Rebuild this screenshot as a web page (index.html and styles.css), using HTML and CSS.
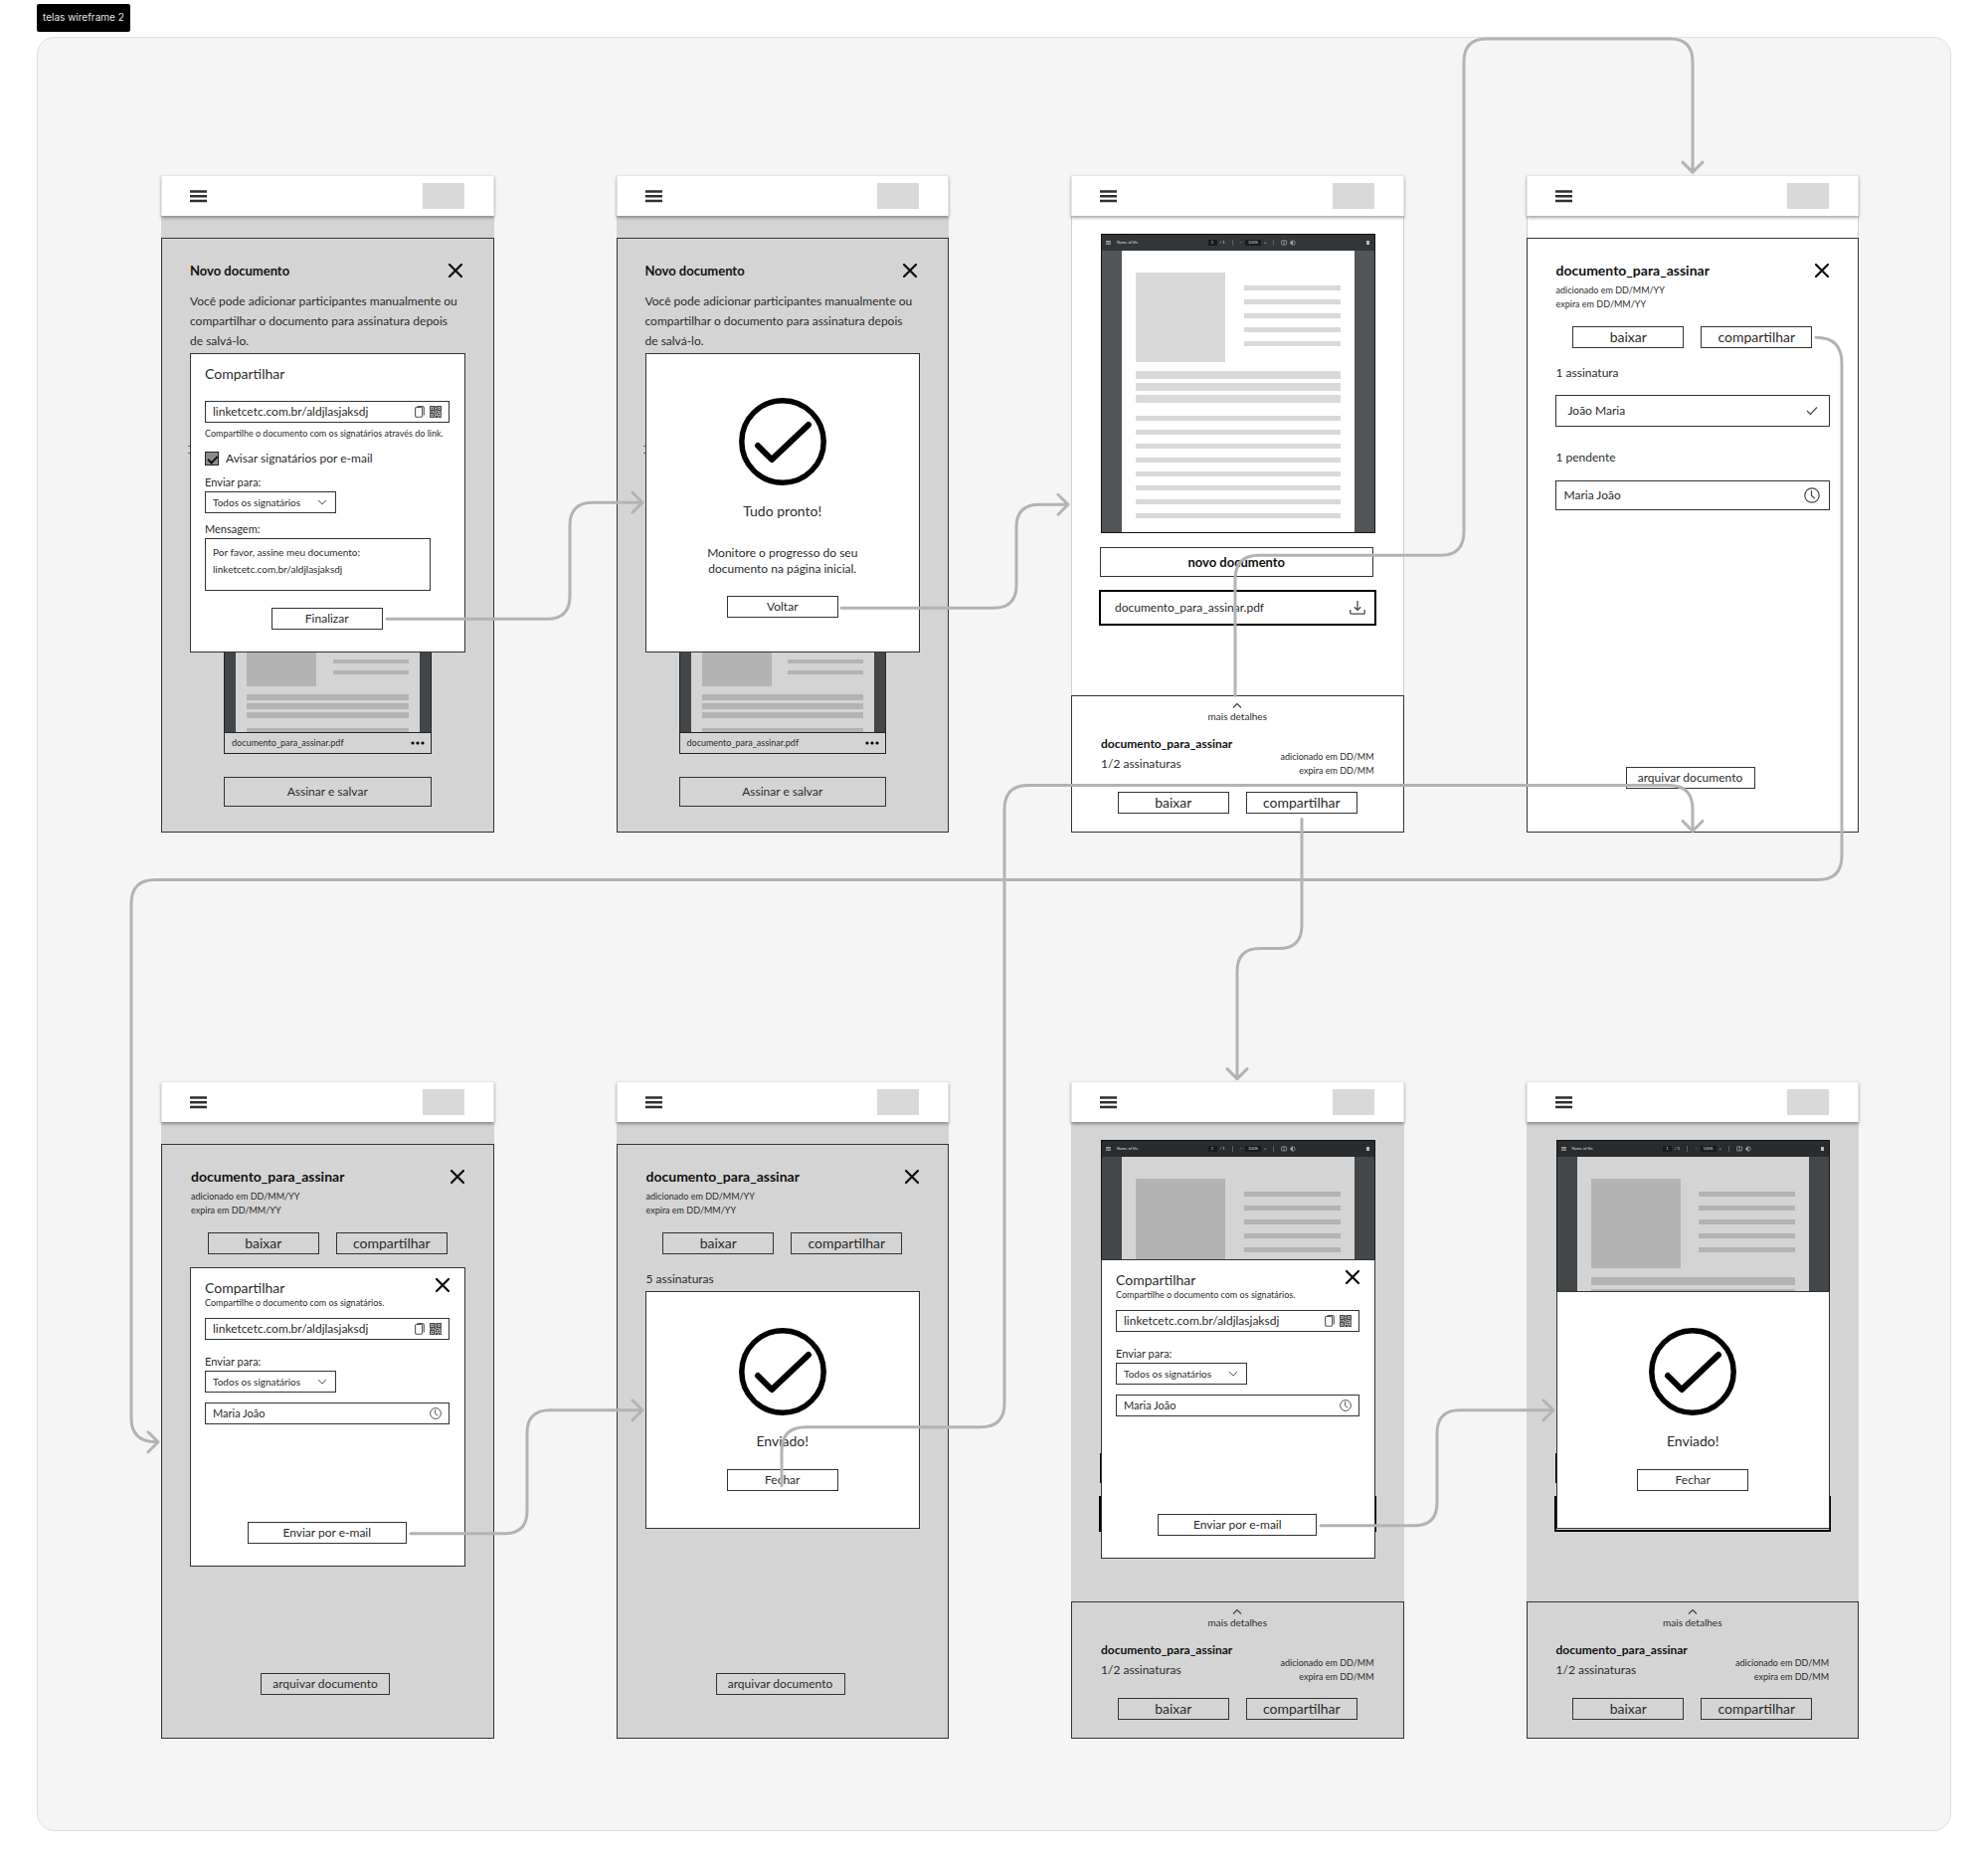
FILE: index.html
```html
<!DOCTYPE html>
<html lang="pt-BR">
<head>
<meta charset="utf-8">
<meta name="viewport" content="width=device-width, initial-scale=1">
<title>telas wireframe 2</title>
<link rel="stylesheet" href="styles.css">
</head>
<body>
<svg class="symbols" aria-hidden="true">
  <symbol id="i-menu" viewBox="0 0 17 13"><path d="M0 1.500h17M0 6.200h17M0 11h17" fill="none" stroke="#2f2f32" stroke-width="2.400"/></symbol>
  <symbol id="i-close" viewBox="0 0 14 14"><path d="M1 1l12 12M13 1L1 13" fill="none" stroke="#111" stroke-width="2.300" stroke-linecap="round"/></symbol>
  <symbol id="i-copy" viewBox="0 0 10 12"><path d="M2.500 .6h5.300a1.500 1.500 0 0 1 1.500 1.500v7.500" fill="none" stroke="#555" stroke-width="1.100"/><rect x=".6" y="1.500" width="7" height="9.800" rx="1.200" fill="none" stroke="#555" stroke-width="1.100"/></symbol>
  <symbol id="i-qr" viewBox="0 0 12 12"><path d="M0 0h12v12H0z" fill="#aaa"/><path d="M.5.5h4v4h-4zM7.500.5h4v4h-4zM.5 7.500h4v4h-4z" fill="none" stroke="#444"/><path d="M2 2h1v1H2zM9 2h1v1H9zM2 9h1v1H2zM5.500 0h1v2h-1zM5.500 3h1v3h-1zM0 5.500h3v1H0zM4 5.500h1.500v1H4zM7 6h2v1H7zM10 5.500h2v1h-2zM6 7h1v2H6zM8 8h2v1H8zM11 7.500h1v2h-1zM6 10h2v2H6zM9 10h1v2H9zM10.500 10.500h1.500v1.500h-1.500z" fill="#444"/></symbol>
  <symbol id="i-down" viewBox="0 0 10 6"><path d="M1 1l4 4 4-4" fill="none" stroke="#555"/></symbol>
  <symbol id="i-up" viewBox="0 0 10 5"><path d="M1 4.500l4-4 4 4" fill="none" stroke="#444" stroke-width="1.200"/></symbol>
  <symbol id="i-tick" viewBox="0 0 12 10"><path d="M1 5l3.500 3.500L11 1.500" fill="none" stroke="#444" stroke-width="1.200"/></symbol>
  <symbol id="i-clock" viewBox="0 0 16 16"><circle cx="8" cy="8" r="7.200" fill="none" stroke="#444" stroke-width="1.200"/><path d="M7.500 3v5.500l3.500 2.500" fill="none" stroke="#444" stroke-width="1.200"/></symbol>
  <symbol id="i-save" viewBox="0 0 16 14"><path d="M8 0v9M4.800 6.200L8 9.400l3.200-3.200M.8 9v3.200a1 1 0 0 0 1 1h12.400a1 1 0 0 0 1-1V9" fill="none" stroke="#444" stroke-width="1.300"/></symbol>
  <symbol id="i-dots" viewBox="0 0 14 4"><circle cx="2" cy="2" r="1.600"/><circle cx="7" cy="2" r="1.600"/><circle cx="12" cy="2" r="1.600"/></symbol>
  <symbol id="i-done" viewBox="0 0 88 88"><circle cx="44" cy="44" r="41.200" fill="none" stroke="#000" stroke-width="5.500"/><path d="M19 48l14 14 37-35" fill="none" stroke="#000" stroke-width="6" stroke-linecap="round" stroke-linejoin="round"/></symbol>
  <symbol id="i-tools" viewBox="0 0 15 6"><rect x=".4" y=".8" width="5.200" height="4.200" rx=".5" fill="none" stroke="#aaa" stroke-width=".7"/><path d="M3 1v4" stroke="#aaa" stroke-width=".7"/><circle cx="12" cy="3" r="2.200" fill="none" stroke="#aaa" stroke-width=".7"/><path d="M9 3l3-2v4z" fill="#aaa"/></symbol>
</svg>

<h1 class="tag">telas wireframe 2</h1>

<main class="board">

  <section class="screen dim">
    <header class="bar"><button class="icon" aria-label="Menu"><svg class="menu"><use href="#i-menu"/></svg></button><span class="logo"></span></header>
    <div class="panel">
      <div class="title-row inset"><h2 class="title">Novo documento</h2><button class="icon" aria-label="Fechar"><svg class="close"><use href="#i-close"/></svg></button></div>
      <p class="intro">Você pode adicionar participantes manualmente ou compartilhar o documento para assinatura depois de salvá-lo.</p>
      <form class="modal share peek">
        <h3 class="modal-title">Compartilhar</h3>
        <div class="link-box first"><input type="text" readonly aria-label="Link" value="linketcetc.com.br/aldjlasjaksdj"><svg class="copy"><use href="#i-copy"/></svg><svg class="qr"><use href="#i-qr"/></svg></div>
        <p class="help">Compartilhe o documento com os signatários através do link.</p>
        <label class="check"><input type="checkbox" checked>Avisar signatários por e-mail</label>
        <label class="label" for="to1">Enviar para:</label>
        <span class="select"><select id="to1"><option>Todos os signatários</option></select><svg class="down"><use href="#i-down"/></svg></span>
        <label class="label message-label" for="msg">Mensagem:</label>
        <textarea id="msg" class="message">Por favor, assine meu documento:
linketcetc.com.br/aldjlasjaksdj</textarea>
        <button type="button" class="btn finish">Finalizar</button>
      </form>
      <div class="mini">
        <div class="mini-page">
          <div class="mini-top"><i class="mini-pic"></i><div class="mini-lines"><i></i><i></i></div></div>
          <div class="mini-bars"><i></i><i></i><i></i></div>
          <i class="mini-last"></i>
        </div>
      </div>
      <div class="mini-file"><span>documento_para_assinar.pdf</span><svg class="dots"><use href="#i-dots"/></svg></div>
      <button class="btn sign">Assinar e salvar</button>
    </div>
  </section>

  <section class="screen dim">
    <header class="bar"><button class="icon" aria-label="Menu"><svg class="menu"><use href="#i-menu"/></svg></button><span class="logo"></span></header>
    <div class="panel">
      <div class="title-row inset"><h2 class="title">Novo documento</h2><button class="icon" aria-label="Fechar"><svg class="close"><use href="#i-close"/></svg></button></div>
      <p class="intro">Você pode adicionar participantes manualmente ou compartilhar o documento para assinatura depois de salvá-lo.</p>
      <div class="modal ready peek">
        <svg class="done"><use href="#i-done"/></svg>
        <h3 class="modal-title">Tudo pronto!</h3>
        <p class="note">Monitore o progresso do seu documento na página inicial.</p>
        <button class="btn">Voltar</button>
      </div>
      <div class="mini">
        <div class="mini-page">
          <div class="mini-top"><i class="mini-pic"></i><div class="mini-lines"><i></i><i></i></div></div>
          <div class="mini-bars"><i></i><i></i><i></i></div>
          <i class="mini-last"></i>
        </div>
      </div>
      <div class="mini-file"><span>documento_para_assinar.pdf</span><svg class="dots"><use href="#i-dots"/></svg></div>
      <button class="btn sign">Assinar e salvar</button>
    </div>
  </section>

  <section class="screen">
    <header class="bar"><button class="icon" aria-label="Menu"><svg class="menu"><use href="#i-menu"/></svg></button><span class="logo"></span></header>
    <div class="home">
      <div class="viewer">
        <div class="tools"><svg class="tiny-menu"><use href="#i-menu"/></svg><span>Name of file</span><div class="tools-mid"><b>1</b><span>/ 1</span><em></em><span>−</span><b class="zoom">100%</b><span>+</span><em></em><svg class="tool-icons"><use href="#i-tools"/></svg></div><i></i></div>
        <div class="page">
          <div class="page-top"><i class="pic"></i><div class="lines"><i></i><i></i><i></i><i></i><i></i></div></div>
          <div class="bars"><i></i><i></i><i></i></div>
          <div class="lines"><i></i><i></i><i></i><i></i><i></i><i></i><i></i><i></i></div>
        </div>
      </div>
      <button class="btn new">novo documento</button>
      <div class="file"><span>documento_para_assinar.pdf</span><svg class="save"><use href="#i-save"/></svg></div>
    </div>
    <footer class="sheet">
      <button class="more"><svg class="up"><use href="#i-up"/></svg>mais detalhes</button>
      <div class="summary"><div><h2 class="doc">documento_para_assinar</h2><p class="count">1/2 assinaturas</p></div><p class="dates">adicionado em DD/MM<br>expira em DD/MM</p></div>
      <div class="actions"><button class="btn big">baixar</button><button class="btn big">compartilhar</button></div>
    </footer>
  </section>

  <section class="screen">
    <header class="bar"><button class="icon" aria-label="Menu"><svg class="menu"><use href="#i-menu"/></svg></button><span class="logo"></span></header>
    <div class="panel">
      <div class="title-row"><h2 class="title large">documento_para_assinar</h2><button class="icon" aria-label="Fechar"><svg class="close"><use href="#i-close"/></svg></button></div>
      <p class="meta">adicionado em DD/MM/YY<br>expira em DD/MM/YY</p>
      <div class="actions"><button class="btn big">baixar</button><button class="btn big">compartilhar</button></div>
      <h3 class="group">1 assinatura</h3>
      <div class="person signed"><span>João Maria</span><svg class="tick"><use href="#i-tick"/></svg></div>
      <h3 class="group next">1 pendente</h3>
      <div class="person"><span>Maria João</span><svg class="clock"><use href="#i-clock"/></svg></div>
      <button class="btn archive">arquivar documento</button>
    </div>
  </section>

  <section class="screen dim">
    <header class="bar"><button class="icon" aria-label="Menu"><svg class="menu"><use href="#i-menu"/></svg></button><span class="logo"></span></header>
    <div class="panel">
      <div class="title-row"><h2 class="title large">documento_para_assinar</h2><button class="icon" aria-label="Fechar"><svg class="close"><use href="#i-close"/></svg></button></div>
      <p class="meta">adicionado em DD/MM/YY<br>expira em DD/MM/YY</p>
      <div class="actions"><button class="btn big">baixar</button><button class="btn big">compartilhar</button></div>
      <form class="modal share below">
        <div class="modal-head"><h3 class="modal-title">Compartilhar</h3><button type="button" class="icon" aria-label="Fechar"><svg class="close"><use href="#i-close"/></svg></button></div>
        <p class="help tight">Compartilhe o documento com os signatários.</p>
        <div class="link-box"><input type="text" readonly aria-label="Link" value="linketcetc.com.br/aldjlasjaksdj"><svg class="copy"><use href="#i-copy"/></svg><svg class="qr"><use href="#i-qr"/></svg></div>
        <label class="label spaced" for="to2">Enviar para:</label>
        <span class="select"><select id="to2"><option>Todos os signatários</option></select><svg class="down"><use href="#i-down"/></svg></span>
        <div class="recipient"><span>Maria João</span><svg class="clock-small"><use href="#i-clock"/></svg></div>
        <button type="button" class="btn send">Enviar por e-mail</button>
      </form>
      <button class="btn archive">arquivar documento</button>
    </div>
  </section>

  <section class="screen dim">
    <header class="bar"><button class="icon" aria-label="Menu"><svg class="menu"><use href="#i-menu"/></svg></button><span class="logo"></span></header>
    <div class="panel">
      <div class="title-row"><h2 class="title large">documento_para_assinar</h2><button class="icon" aria-label="Fechar"><svg class="close"><use href="#i-close"/></svg></button></div>
      <p class="meta">adicionado em DD/MM/YY<br>expira em DD/MM/YY</p>
      <div class="actions"><button class="btn big">baixar</button><button class="btn big">compartilhar</button></div>
      <h3 class="group">5 assinaturas</h3>
      <div class="modal sent">
        <svg class="done"><use href="#i-done"/></svg>
        <h3 class="modal-title">Enviado!</h3>
        <button class="btn">Fechar</button>
      </div>
      <button class="btn archive">arquivar documento</button>
    </div>
  </section>

  <section class="screen dim">
    <header class="bar"><button class="icon" aria-label="Menu"><svg class="menu"><use href="#i-menu"/></svg></button><span class="logo"></span></header>
    <div class="home">
      <div class="viewer">
        <div class="tools"><svg class="tiny-menu"><use href="#i-menu"/></svg><span>Name of file</span><div class="tools-mid"><b>1</b><span>/ 1</span><em></em><span>−</span><b class="zoom">100%</b><span>+</span><em></em><svg class="tool-icons"><use href="#i-tools"/></svg></div><i></i></div>
        <div class="page">
          <div class="page-top"><i class="pic"></i><div class="lines"><i></i><i></i><i></i><i></i><i></i></div></div>
        </div>
      </div>
      <div class="new-edge"></div>
      <div class="file"></div>
      <form class="modal share over">
        <div class="modal-head"><h3 class="modal-title">Compartilhar</h3><button type="button" class="icon" aria-label="Fechar"><svg class="close"><use href="#i-close"/></svg></button></div>
        <p class="help tight">Compartilhe o documento com os signatários.</p>
        <div class="link-box"><input type="text" readonly aria-label="Link" value="linketcetc.com.br/aldjlasjaksdj"><svg class="copy"><use href="#i-copy"/></svg><svg class="qr"><use href="#i-qr"/></svg></div>
        <label class="label spaced" for="to3">Enviar para:</label>
        <span class="select"><select id="to3"><option>Todos os signatários</option></select><svg class="down"><use href="#i-down"/></svg></span>
        <div class="recipient"><span>Maria João</span><svg class="clock-small"><use href="#i-clock"/></svg></div>
        <button type="button" class="btn send">Enviar por e-mail</button>
      </form>
    </div>
    <footer class="sheet">
      <button class="more"><svg class="up"><use href="#i-up"/></svg>mais detalhes</button>
      <div class="summary"><div><h2 class="doc">documento_para_assinar</h2><p class="count">1/2 assinaturas</p></div><p class="dates">adicionado em DD/MM<br>expira em DD/MM</p></div>
      <div class="actions"><button class="btn big">baixar</button><button class="btn big">compartilhar</button></div>
    </footer>
  </section>

  <section class="screen dim">
    <header class="bar"><button class="icon" aria-label="Menu"><svg class="menu"><use href="#i-menu"/></svg></button><span class="logo"></span></header>
    <div class="home">
      <div class="viewer">
        <div class="tools"><svg class="tiny-menu"><use href="#i-menu"/></svg><span>Name of file</span><div class="tools-mid"><b>1</b><span>/ 1</span><em></em><span>−</span><b class="zoom">100%</b><span>+</span><em></em><svg class="tool-icons"><use href="#i-tools"/></svg></div><i></i></div>
        <div class="page">
          <div class="page-top"><i class="pic"></i><div class="lines"><i></i><i></i><i></i><i></i><i></i></div></div>
          <div class="bars"><i></i><i></i></div>
        </div>
      </div>
      <div class="new-edge"></div>
      <div class="file"></div>
      <div class="modal sent over low">
        <svg class="done"><use href="#i-done"/></svg>
        <h3 class="modal-title">Enviado!</h3>
        <button class="btn">Fechar</button>
      </div>
    </div>
    <footer class="sheet">
      <button class="more"><svg class="up"><use href="#i-up"/></svg>mais detalhes</button>
      <div class="summary"><div><h2 class="doc">documento_para_assinar</h2><p class="count">1/2 assinaturas</p></div><p class="dates">adicionado em DD/MM<br>expira em DD/MM</p></div>
      <div class="actions"><button class="btn big">baixar</button><button class="btn big">compartilhar</button></div>
    </footer>
  </section>

  <svg class="flows" viewBox="37 37 1925 1803" preserveAspectRatio="none" aria-hidden="true">
    <path d="M389 622H550Q573 622 573 599V528Q573 505 596 505H645M636 495l10 10-10 10"/>
    <path d="M846 611H999Q1022 611 1022 588V530Q1022 507 1045 507H1073M1064 497l10 10-10 10"/>
    <path d="M1242 699V582Q1242 558 1266 558H1449Q1472 558 1472 534V62Q1472 39 1495 39H1679Q1702 39 1702 62V172M1692 163l10 10 10-10"/>
    <path d="M1826 339Q1852 339 1852 365V860Q1852 884 1828 884H156Q132 884 132 908V1425Q132 1449 158 1449M149 1439l10 10-10 10"/>
    <path d="M1309 823V930Q1309 953 1286 953H1267Q1244 953 1244 976V1083M1234 1074l10 10 10-10"/>
    <path d="M413 1541H507Q530 1541 530 1518V1440Q530 1417 553 1417H645M636 1407l10 10-10 10"/>
    <path d="M786 1493V1458Q786 1434 810 1434H986Q1010 1434 1010 1410V813Q1010 789 1034 789H1678Q1702 789 1702 813V834M1692 825l10 10 10-10"/>
    <path d="M1328 1533H1422Q1445 1533 1445 1510V1440Q1445 1417 1468 1417H1561M1552 1407l10 10-10 10"/>
  </svg>
</main>
</body>
</html>
```
FILE: styles.css
```css
* { box-sizing: border-box; }
body { margin: 0; padding: 4px 37px 38px; background: #fff; font: 12px/20px Lato, sans-serif; color: #2b2b2b; }
h1, h2, h3, p { margin: 0; font-size: inherit; font-weight: 400; }
button, input, select, textarea { margin: 0; padding: 0; font: inherit; color: inherit; border-radius: 0; }
svg { display: block; flex: none; }
.symbols { position: absolute; width: 0; height: 0; }

.tag { width: max-content; height: 28px; padding: 0 6px; border-radius: 2px; background: #000; color: #e6e6e6; font: 10px/26px Inter, sans-serif; }

/* board and screens */
.board { position: relative; display: grid; grid-template-columns: repeat(4, 1fr); gap: 250px 123px; margin-top: 5px; padding: 138px 92px 92px 124px; border: 1px solid #e0e0e0; border-radius: 18px; background: #f5f5f5; }
.flows { position: absolute; inset: -1px; width: calc(100% + 2px); height: calc(100% + 2px); overflow: visible; fill: none; stroke: #b3b3b3; stroke-width: 3; stroke-linecap: round; stroke-linejoin: round; pointer-events: none; }
.screen { --paper: #fff; --shape: #d9d9d9; --side: #525659; --tools: #323639; display: flex; flex-direction: column; background: var(--paper); box-shadow: inset 0 0 0 1px #d0d0d0; }
.screen.dim { --paper: #d4d4d4; --shape: #b3b3b3; --side: #434749; --tools: #282c2f; box-shadow: none; }
.bar { display: flex; align-items: center; justify-content: space-between; height: 41px; padding: 0 29px 0 28px; border: 1px solid #e6e6e6; border-bottom: 0; background: #fff; box-shadow: 0 2px 3px rgba(0, 0, 0, .35); }
.logo { width: 42px; height: 26px; background: #d9d9d9; }
.icon { display: block; border: 0; background: none; }
.menu { width: 17px; height: 13px; }
.close { width: 14px; height: 14px; }

/* buttons */
.btn { display: block; width: 112px; height: 22px; border: 1px solid #333; background: none; line-height: 20px; text-align: center; }
.btn.big { font-size: 14px; }
.actions { display: flex; justify-content: center; gap: 17px; }

/* full panel */
.panel { display: flex; flex: 1; flex-direction: column; margin-top: 22px; padding: 22px 28px 25px; border: 1px solid #333; }
.title-row { display: flex; align-items: center; justify-content: space-between; padding: 0 1px; }
.title-row.inset { padding: 0 3px 0 0; }
.title { color: #111; font-size: 13px; font-weight: 700; }
.title.large { font-size: 14px; }
.intro { margin-top: 11px; padding-right: 4px; }
.meta { margin: 3px 0 15px; padding-left: 1px; font-size: 9px; line-height: 14px; }
.group { margin-top: 15px; padding-left: 1px; }
.group.next { margin-top: 21px; }
.person { display: flex; align-items: center; justify-content: space-between; height: 30px; margin-top: 13px; padding: 0 9px 0 8px; border: 1px solid #333; }
.person.signed { height: 32px; margin-top: 12px; padding: 0 11px 0 12px; }
.tick { width: 12px; height: 10px; }
.clock { width: 16px; height: 16px; }
.archive { width: 130px; margin: auto auto 18px 71px; }

/* dialogs */
.modal { position: relative; border: 1px solid #333; background: #fff; }
.modal-title { font-size: 14px; }
.share { padding: 10px 15px 22px 14px; }
.share.below { margin-top: 13px; }
.peek { margin-top: 2px; }
.peek::before { content: ""; position: absolute; left: -3px; top: 92px; width: 2px; height: 6px; border: 1px solid #666; border-width: 1px 0; }
.modal-head { display: flex; justify-content: space-between; align-items: flex-start; height: 20px; }
.link-box { display: flex; align-items: center; height: 22px; margin-top: 10px; padding: 0 7px; border: 1px solid #333; }
.link-box.first { margin-top: 17px; }
.link-box input { flex: 1; min-width: 0; border: 0; outline: 0; background: none; line-height: 18px; }
.copy { width: 10px; height: 12px; margin-right: 5px; }
.qr { width: 12px; height: 12px; }
.help { margin-top: 4px; font-size: 9px; line-height: 14px; white-space: nowrap; }
.help.tight { margin-top: 0; line-height: 10px; }
.check { display: flex; align-items: center; height: 14px; margin-top: 11px; gap: 7px; }
.check input { position: relative; width: 14px; height: 14px; appearance: none; border: 1px solid #222; background: #8c8c8c; }
.check input:checked::after { content: ""; position: absolute; left: 4px; top: 1px; width: 4px; height: 8px; border: solid #111; border-width: 0 2px 2px 0; transform: rotate(45deg); }
.label { display: block; margin-top: 10px; font-size: 11px; line-height: 14px; }
.label.spaced { margin-top: 15px; }
.message-label { margin-top: 9px; }
.select { position: relative; display: block; width: 132px; height: 22px; margin-top: 2px; }
.select select { width: 100%; height: 100%; padding: 0 7px; appearance: none; border: 1px solid #333; background: none; font-size: 10px; }
.down { position: absolute; right: 9px; top: 8px; width: 10px; height: 6px; }
.message { display: block; width: 227px; height: 53px; margin-top: 2px; padding: 5px 7px; border: 1px solid #333; background: none; resize: none; overflow: hidden; font-size: 10px; line-height: 17px; }
.finish { margin: 17px auto 0; }
.recipient { display: flex; align-items: center; justify-content: space-between; height: 22px; margin-top: 10px; padding: 0 7px; border: 1px solid #333; font-size: 11px; }
.clock-small { width: 12px; height: 12px; }
.send { width: 160px; margin: 98px auto 0; }
.ready, .sent { display: flex; flex-direction: column; align-items: center; }
.ready { padding: 44px 0 34px; }
.sent { margin-top: 2px; padding: 36px 0 37px; }
.done { width: 88px; height: 88px; margin-bottom: 16px; }
.note { width: 170px; margin: 24px 0 19px; line-height: 16px; text-align: center; }
.sent .btn { margin-top: 18px; }

/* cropped document under a dialog */
.mini { margin: 0 34px; padding: 0 11px; border: 1px solid #222; border-width: 0 1px; background: var(--side); }
.mini-page { display: flex; flex-direction: column; padding: 0 11px; background: var(--paper); }
.mini i, .viewer i { display: block; background: var(--shape); }
.mini-top { display: flex; justify-content: space-between; }
.mini-pic { width: 70px; height: 34px; }
.mini-lines { display: grid; gap: 7px; width: 76px; padding: 7px 0 12px; }
.mini-lines i, .mini-last { height: 4px; }
.mini-bars { display: grid; gap: 3px; margin: 8px 0 10px; }
.mini-bars i { height: 6px; }
.mini-file { display: flex; align-items: center; justify-content: space-between; height: 22px; margin: 0 34px 23px; padding: 0 6px 0 7px; border: 1px solid #222; font-size: 9px; }
.dots { width: 14px; height: 4px; }
.sign { width: auto; height: 30px; margin: 0 34px; }

/* home screen */
.home { position: relative; flex: 1; padding: 18px 28px 70px; }
.viewer { height: 301px; margin: 0 1px 0 2px; border: 1px solid #111; background: var(--side); overflow: hidden; }
.tools { display: flex; align-items: center; height: 16px; padding: 0 5px 0 4px; background: var(--tools); color: #ddd; font-size: 4px; line-height: 6px; }
.tiny-menu { width: 5px; height: 4px; margin-right: 6px; filter: invert(1); }
.tools-mid { display: flex; align-items: center; gap: 3px; margin: 0 auto; }
.tools-mid b { width: 9px; background: #191b1c; font-weight: 400; text-align: center; }
.tools-mid .zoom { width: 16px; }
.tools-mid em { width: 1px; height: 6px; margin: 0 4px; background: #5c6062; }
.tool-icons { width: 15px; height: 6px; }
.tools > i { width: 3px; height: 4px; background: #bbb; }
.page { height: 100%; margin: 0 20px; padding: 22px 14px 14px; background: var(--paper); }
.page-top { display: flex; justify-content: space-between; align-items: flex-start; }
.pic { width: 90px; height: 90px; }
.lines { display: grid; gap: 9px; }
.lines i { height: 5px; }
.page-top .lines { width: 97px; padding-top: 13px; }
.bars { display: grid; gap: 4px; margin: 9px 0 13px; }
.bars i { height: 8px; }
.new { width: calc(100% - 4px); height: 30px; margin: 14px 0 13px 1px; color: #111; font-size: 13px; font-weight: 700; }
.new-edge { height: 30px; margin: 14px 2px 13px 1px; border-left: 2px solid #000; }
.file { display: flex; align-items: center; justify-content: space-between; height: 36px; padding: 0 9px 0 14px; border: 2px solid #000; }
.save { width: 16px; height: 14px; }
.over { position: absolute; left: 30px; right: 29px; top: 138px; }
.over.low { top: 170px; margin: 0; }
.sheet { padding: 7px 28px 18px; border: 1px solid #333; }
.more { display: flex; flex-direction: column; align-items: center; gap: 1px; margin: 0 auto 11px; border: 0; background: none; font-size: 10px; line-height: 14px; }
.up { width: 10px; height: 5px; }
.summary { display: flex; justify-content: space-between; height: 44px; margin: 0 1px 14px; }
.doc { color: #111; font-weight: 700; }
.dates { padding-top: 16px; font-size: 9px; line-height: 14px; text-align: right; }
```
